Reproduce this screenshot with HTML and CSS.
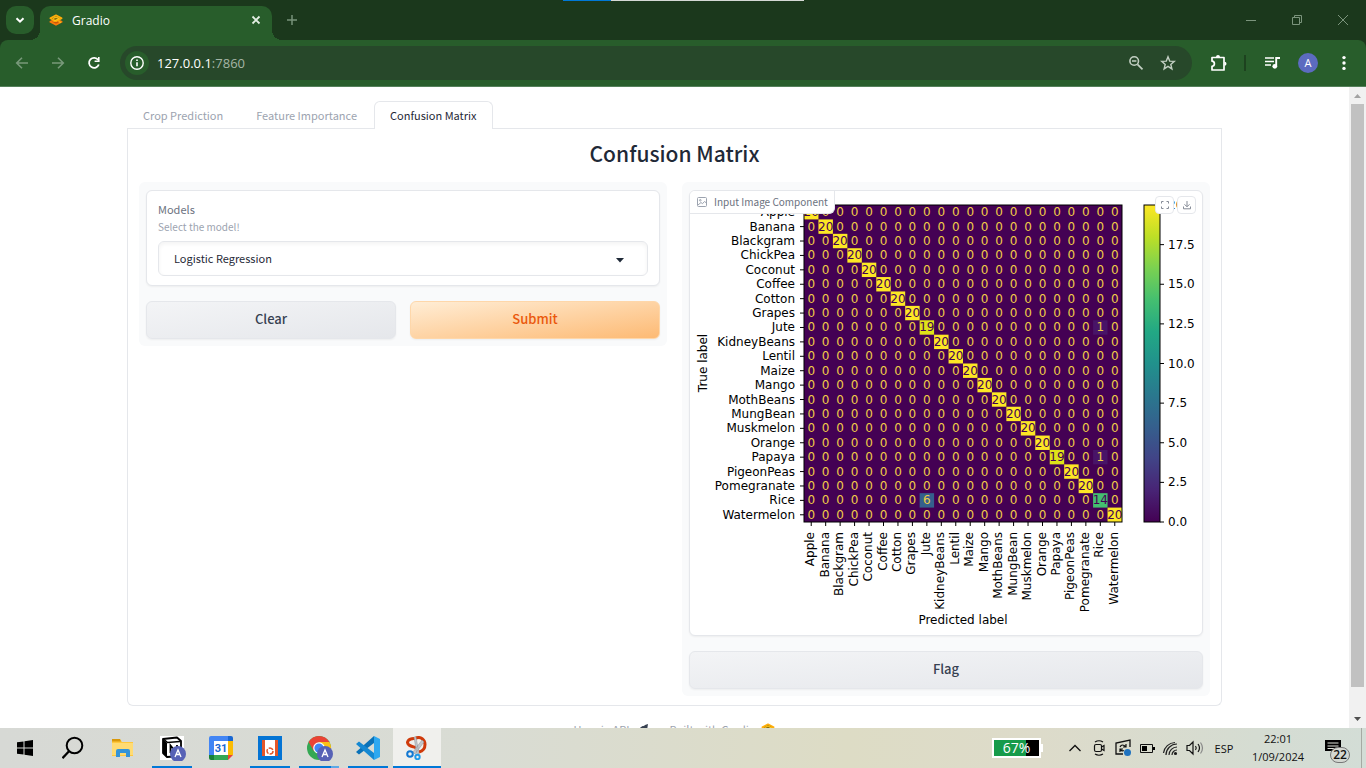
FILE: index.html
```html
<!DOCTYPE html>
<html lang="en">
<head>
<meta charset="utf-8">
<title>Gradio</title>
<link rel="stylesheet" href="styles.css">
</head>
<body>
<svg class="defs" aria-hidden="true">
  <symbol id="gradio-logo" viewBox="0 0 14 12">
    <path d="M7 5 12.700 7.800 7 10.800 1.300 7.800z" fill="#c8560a" stroke="#f97b0c" stroke-width="1.700" stroke-linejoin="round"/>
    <path d="M7 1.200 12.700 4.200 7 7.200 1.300 4.200z" fill="#8a6a10" stroke="#ffad0a" stroke-width="1.600" stroke-linejoin="round"/>
    <path d="M4 4.500 7 3l3 1.500-5.500 3M9.500 7.500l2.500 1" fill="none" stroke="#ffc917" stroke-width="1.100"/>
  </symbol>
</svg>

<header class="browser">
  <div class="capture-strip"></div>
  <div class="tabstrip">
    <button class="tab-search" aria-label="Search tabs"><svg width="12" height="12" viewBox="0 0 12 12"><path d="M2.500 4.200 6 7.700l3.500-3.500" fill="none" stroke="#fff" stroke-width="2"/></svg></button>
    <div class="browser-tab">
      <svg class="favicon" width="14" height="12"><use href="#gradio-logo"/></svg>
      <span class="browser-tab-title">Gradio</span>
      <button class="plain" aria-label="Close tab"><svg width="16" height="16" viewBox="0 0 16 16"><path d="m4.500 4.500 7 7m0-7-7 7" stroke="#e4efe4" stroke-width="1.800"/></svg></button>
    </div>
    <button class="plain new-tab" aria-label="New tab"><svg width="16" height="16" viewBox="0 0 16 16"><path d="M8 3v10M3 8h10" stroke="#78927a" stroke-width="1.500"/></svg></button>
    <div class="window-buttons">
      <button class="plain" aria-label="Minimize"><svg width="12" height="12"><path d="M1 6.500h10" stroke="#7b947c"/></svg></button>
      <button class="plain" aria-label="Restore"><svg width="12" height="12"><path d="M1.500 3.500h7v7h-7zM3.500 3.500v-2h7v7h-2" fill="none" stroke="#7b947c"/></svg></button>
      <button class="plain" aria-label="Close"><svg width="12" height="12"><path d="m1 1 10 10m0-10L1 11" stroke="#7b947c"/></svg></button>
    </div>
  </div>
  <div class="toolbar">
    <button class="plain tool" aria-label="Back"><svg width="16" height="16" viewBox="0 0 16 16"><path d="M14 8H3M8 2.700 2.700 8 8 13.300" fill="none" stroke="#78997a" stroke-width="1.600"/></svg></button>
    <button class="plain tool" aria-label="Forward"><svg width="16" height="16" viewBox="0 0 16 16"><path d="M2 8h11M8 2.700 13.300 8 8 13.300" fill="none" stroke="#78997a" stroke-width="1.600"/></svg></button>
    <button class="plain tool" aria-label="Reload"><svg width="16" height="16" viewBox="0 0 16 16"><path d="M12.800 9.500A5 5 0 1 1 12.200 5" fill="none" stroke="#fff" stroke-width="1.800"/><path d="M13.600 2v5H8.600V5.400H12V2z" fill="#fff"/></svg></button>
    <div class="omnibox">
      <button class="plain site-info" aria-label="Site information"><svg width="16" height="16" viewBox="0 0 16 16"><circle cx="8" cy="8" r="6.200" fill="none" stroke="#fff" stroke-width="1.400"/><path d="M8 7.300v4M8 4.400v1.600" stroke="#fff" stroke-width="1.600"/></svg></button>
      <span class="url">127.0.0.1<span class="port">:7860</span></span>
      <button class="plain omni-icon" aria-label="Zoom"><svg width="16" height="16" viewBox="0 0 16 16"><circle cx="6.200" cy="6" r="4.300" fill="none" stroke="#c2cfc2" stroke-width="1.600"/><path d="M4 6h4.400M9.500 9.300l5 5" stroke="#c2cfc2" stroke-width="1.700"/></svg></button>
      <button class="plain omni-icon" aria-label="Bookmark this tab"><svg width="16" height="16" viewBox="0 0 16 16"><path d="m8 1.800 1.700 4.300 4.600.3-3.500 3 1.100 4.500L8 11.400l-3.900 2.500 1.100-4.500-3.500-3 4.600-.3z" fill="none" stroke="#c2cfc2" stroke-width="1.400"/></svg></button>
    </div>
    <button class="plain tool extensions" aria-label="Extensions"><svg width="18" height="18" viewBox="0 0 18 18"><path d="M3 3.500h12v12.500H3v-3.700q2.400-.3 2.400-2.600T3 7.200z" fill="none" stroke="#fff" stroke-width="1.700" stroke-linejoin="round"/><path d="M7 3a2 2 0 0 1 4 0zM15.500 7.700a2 2 0 0 1 0 4z" fill="#fff"/></svg></button>
    <span class="tool-separator"></span>
    <button class="plain tool" aria-label="Media controls"><svg width="18" height="18" viewBox="0 0 18 18"><path d="M2 4h9M2 7.500h9M2 11h6" stroke="#fff" stroke-width="1.700"/><path d="M13.200 12V4h3.800" fill="none" stroke="#fff" stroke-width="1.900"/><circle cx="11.800" cy="12.300" r="2.400" fill="#fff"/></svg></button>
    <button class="plain tool" aria-label="Profile"><span class="avatar">A</span></button>
    <button class="plain tool" aria-label="Menu"><svg width="16" height="16"><g fill="#fff"><circle cx="8" cy="2.600" r="1.700"/><circle cx="8" cy="8" r="1.700"/><circle cx="8" cy="13.400" r="1.700"/></g></svg></button>
  </div>
</header>

<div class="viewport">
  <div class="page">
    <main class="container">
      <div class="tabs" role="tablist">
        <button class="tab" role="tab">Crop Prediction</button>
        <button class="tab" role="tab">Feature Importance</button>
        <button class="tab tab-selected" role="tab" aria-selected="true">Confusion Matrix</button>
      </div>
      <section class="panel">
        <h1>Confusion Matrix</h1>
        <div class="columns">
          <div class="column">
            <div class="block field">
              <label for="models">Models</label>
              <p class="hint">Select the model!</p>
              <div class="select-wrap">
                <select id="models"><option>Logistic Regression</option></select>
                <svg class="caret" width="8" height="5" viewBox="0 0 8 5"><path d="M0 0h8L4 4.500z" fill="#1f2937"/></svg>
              </div>
            </div>
            <div class="actions">
              <button class="btn">Clear</button>
              <button class="btn btn-primary">Submit</button>
            </div>
          </div>
          <div class="column">
            <div class="block image-block">
              <svg id="chart" class="chart" viewBox="0 0 512 444" role="img" aria-label="Confusion matrix"></svg>
              <div class="image-label">
                <svg width="10" height="10" viewBox="0 0 10 10" fill="none" stroke="#9ca3af"><rect x=".500" y=".500" width="9" height="9" rx="1"/><circle cx="3.300" cy="3.300" r=".800"/><path d="m1 8 3-2.500 1.500 1.200L7.500 4.500 9.500 6"/></svg>
                <span>Input Image Component</span>
              </div>
              <div class="image-tools">
                <button aria-label="Fullscreen"><svg width="10" height="10" viewBox="0 0 10 10"><path d="M1.500 3.500v-2h2M6.500 1.500h2v2M8.500 6.500v2h-2M3.500 8.500h-2v-2" fill="none" stroke="#858b96"/></svg></button>
                <button aria-label="Download"><svg width="10" height="10" viewBox="0 0 10 10"><path d="M5 1v5.500M2.500 4.300 5 6.800l2.500-2.500M1.500 6.500v2.300h7V6.500" fill="none" stroke="#858b96"/></svg></button>
              </div>
            </div>
            <button class="btn">Flag</button>
          </div>
        </div>
      </section>
    </main>
    <footer class="page-footer">
      <a href="#api">Use via API <svg width="12" height="12" viewBox="0 0 12 12"><path d="M2 5C4 2.500 6 3.500 7 2L10 1l-.500 3-.500 5L6 11 3 9z" fill="#374151"/></svg></a>
      <a href="#gradio">Built with Gradio <svg width="14" height="12"><use href="#gradio-logo"/></svg></a>
    </footer>
  </div>
  <div class="scrollbar">
    <svg width="17" height="17"><path d="M5 11h7L8.500 7z" fill="#a3a3a3"/></svg>
    <div class="scroll-thumb"></div>
    <svg width="17" height="17"><path d="M5 6h7l-3.500 4z" fill="#505050"/></svg>
  </div>
</div>

<footer class="taskbar">
  <div class="apps">
    <button class="app" aria-label="Start"><svg width="16" height="16"><path d="M0 2.300 6.500 1.400V7.500H0zM7.500 1.200 16 0v7.500H7.500zM0 8.500h6.500v6.100L0 13.700zM7.500 8.500H16V16l-8.500-1.200z"/></svg></button>
    <button class="app" aria-label="Search"><svg width="24" height="24"><circle cx="12.500" cy="9.500" r="7.800" fill="none" stroke="#000" stroke-width="2"/><path d="m7 15.200-6.500 7" stroke="#000" stroke-width="2.200"/></svg></button>
    <button class="app" aria-label="File Explorer"><svg width="24" height="24"><path d="M1 3h8l2 3h11v14H1z" fill="#ffc83d"/><path d="M1 3h8l1 2.500H1z" fill="#d9980a"/><path d="M1 7h21v12H1z" fill="#ffdb73"/><path d="M5 21v-6q0-2 2-2h10q2 0 2 2v6h-4v-4H9v4z" fill="#3594d8"/></svg></button>
    <button class="app running" aria-label="Notion"><svg width="28" height="26"><path fill="#fff" d="M2 1h24v24H2z"/><path d="m5 4 14-1.500 4 3.500v15l-14 1-4-4z" fill="#fff" stroke="#000" stroke-width="1.800" stroke-linejoin="round"/><path d="m5 4 4 4v14l-4-4z"/><path d="m6 4.500 3.500 3L22 6.500" fill="none" stroke="#000" stroke-width="1.600"/><path d="M12.500 18v-7.500l6.500 8V10" fill="none" stroke="#000" stroke-width="1.800"/><circle cx="20" cy="19" r="8" fill="#5762b6"/><path d="m17 22 3-7 3 7m-5-2.500h4" fill="none" stroke="#fff" stroke-width="1.300"/></svg></button>
    <button class="app" aria-label="Calendar"><svg width="24" height="24"><path d="M0 2q0-2 2-2h17v5H5v14H0z" fill="#4285f4"/><path d="M19 0h3q2 0 2 2v3h-5z" fill="#1967d2"/><path d="M19 5h5v14h-5z" fill="#fbbc04"/><path d="M5 19h14v5H5z" fill="#34a853"/><path d="M0 19h5v5H2q-2 0-2-2z" fill="#188038"/><path d="M19 19h5l-5 5z" fill="#ea4335"/><path d="M5 5h14v14H5z" fill="#fff"/><text x="12" y="16" class="calendar-day">31</text></svg></button>
    <button class="app running" aria-label="Recorder"><svg width="24" height="24"><path d="M0 0h24v24H0z" fill="#0474d4"/><path d="M4 4h16v16H4z" fill="#fff"/><path d="M4 4h3v16H4zM17 4h3v16h-3z" fill="#e4572a"/><circle cx="12" cy="15" r="3" fill="none" stroke="#e4572a" stroke-width="1.500" stroke-dasharray="5 1.200"/></svg></button>
    <button class="app running stacked" aria-label="Chrome"><svg width="28" height="26"><circle cx="14" cy="13" r="12" fill="#34a853"/><path d="M3.600 7A12 12 0 0 1 24.400 7H14L8.800 16z" fill="#ea4335"/><path d="M24.400 7A12 12 0 0 1 14 25l5.200-9L14 7z" fill="#fbc116"/><circle cx="14" cy="13" r="5.800" fill="#fff"/><circle cx="14" cy="13" r="4.600" fill="#4285f4"/><circle cx="20" cy="19" r="8" fill="#5762b6"/><path d="m17 22 3-7 3 7m-5-2.500h4" fill="none" stroke="#fff" stroke-width="1.300"/></svg></button>
    <button class="app running" aria-label="Visual Studio Code"><svg width="24" height="24"><path d="M18 0v7L3 18.500l-3-2.500z" fill="#0a72b8"/><path d="M18 24v-7L3 5.500 0 8z" fill="#1488d2"/><path d="M18 0 24 3v18l-6 3z" fill="#2ea8f0"/></svg></button>
    <button class="app running active" aria-label="Snipping Tool"><svg width="24" height="24"><path d="M10 2.500C16-.5 20 4 20 8.500S18 15 14 16" fill="none" stroke="#cf3a0b" stroke-width="3"/><path d="M10 2.500C3 2 1 6.500 4 9s5 1 7 3" fill="none" stroke="#cf3a0b" stroke-width="3"/><path d="M9 1h2l3 17-2 1zM17 4l2 2-9 12-2-2z" fill="#c2c6ca" stroke="#8b9197" stroke-width=".500"/><circle cx="5" cy="18" r="2.800" fill="none" stroke="#1377d1" stroke-width="2"/><circle cx="12.500" cy="21" r="2.200" fill="none" stroke="#229ae8" stroke-width="2"/></svg></button>
  </div>
  <div class="tray">
    <div class="battery-meter"><span>67%</span></div>
    <button class="tray-icon" aria-label="Show hidden icons"><svg width="18" height="18"><path d="m3.500 12 5.500-5.500L14.500 12" fill="none" stroke="#111" stroke-width="1.300"/></svg></button>
    <button class="tray-icon" aria-label="Meet now"><svg width="18" height="18" fill="none" stroke="#111" stroke-width="1.200"><rect x="4.500" y="5.500" width="7" height="7" rx="1.500"/><path d="m11.500 8 2.500-1.500v5L11.500 10M5 3q4-2.500 8 0M5 15q4 2.500 8 0"/></svg></button>
    <button class="tray-icon" aria-label="Sync"><svg width="18" height="18"><path d="M9 15H2V4l14-3v7" fill="none" stroke="#111" stroke-width="1.300"/><path d="M6 8q2-4 6 0M12 5v3H9M6 13v-3h3M6 10.500q2 2 4 1" fill="none" stroke="#111" stroke-width="1.200"/><circle cx="13.500" cy="13.500" r="3.500" fill="#1f72bf"/></svg></button>
    <button class="tray-icon" aria-label="Battery"><svg width="18" height="18"><path d="M2.500 5.500h12v8h-12z" fill="none" stroke="#111"/><path d="M4 7h5v5H4zM15 8h2v3h-2z"/></svg></button>
    <button class="tray-icon" aria-label="Network"><svg width="18" height="18" fill="none" stroke="#222" stroke-width="1.200"><path d="M4 16A11 11 0 0 1 15 5M7 16a8 8 0 0 1 8-8M10 16a5 5 0 0 1 5-5M1.500 14A12 12 0 0 1 13 3.500"/><circle cx="13.500" cy="14.500" r="1" fill="#111"/></svg></button>
    <button class="tray-icon" aria-label="Volume"><svg width="18" height="18" fill="none" stroke="#111" stroke-width="1.200"><path d="M1 6.500h2.500L7 3v12l-3.500-3.500H1zM9.500 7q1.500 2 0 4M12 5q3 4 0 8"/><path d="M14.500 3.500q4 5.500 0 11" stroke="#888"/></svg></button>
    <span class="language">ESP</span>
    <div class="clock"><span>22:01</span><span>1/09/2024</span></div>
    <button class="notifications" aria-label="Notifications"><svg width="30" height="30"><path d="M5 7h16v11h-4l-3 3v-3H5z"/><path d="M7.500 10h11M7.500 13h11M7.500 15.500h8" stroke="#dfe3da"/></svg><span class="count">22</span></button>
    <span class="show-desktop"></span>
  </div>
</footer>
<script src="chart.js"></script>
</body>
</html>
```
FILE: styles.css
```css
* { box-sizing: border-box; }

body {
  margin: 0;
  height: 100vh;
  display: flex;
  flex-direction: column;
  overflow: hidden;
  background: #fff;
  font-family: "Open Sans", "Noto Sans", sans-serif;
}

button { font: inherit; color: inherit; cursor: pointer; }
svg { display: block; }
.defs { position: absolute; width: 0; height: 0; }

.plain {
  display: flex;
  align-items: center;
  justify-content: center;
  padding: 0;
  border: 0;
  background: none;
}

/* Browser frame */
.browser { flex: none; position: relative; background: #1b381c; }

.capture-strip {
  position: absolute;
  top: 0;
  left: 563px;
  width: 241px;
  height: 1px;
  background: linear-gradient(90deg, #0078d7 48px, #d5d9d5 48px);
}

.tabstrip { display: flex; align-items: center; height: 40px; padding-left: 6px; }

.tab-search {
  display: flex;
  align-items: center;
  justify-content: center;
  width: 28px;
  height: 28px;
  padding: 0;
  border: 0;
  border-radius: 10px;
  background: #285d2b;
}

.browser-tab {
  position: relative;
  display: flex;
  align-items: center;
  align-self: flex-end;
  width: 232px;
  height: 34px;
  margin-left: 6px;
  padding: 0 8px 6px 9px;
  border-radius: 10px 10px 0 0;
  background: #285d2b;
  color: #fff;
  font-size: 12px;
}

.browser-tab::before,
.browser-tab::after {
  content: "";
  position: absolute;
  bottom: 0;
  width: 10px;
  height: 10px;
}
.browser-tab::before { left: -10px; background: radial-gradient(circle at 0 0, transparent 10px, #285d2b 10px); }
.browser-tab::after { right: -10px; background: radial-gradient(circle at 100% 0, transparent 10px, #285d2b 10px); }
.browser-tab-title { flex: 1; margin-left: 9px; }
.new-tab { width: 28px; height: 28px; margin-left: 6px; }
.window-buttons { display: flex; margin-left: auto; }
.window-buttons .plain { width: 46px; height: 40px; }

.toolbar {
  display: flex;
  align-items: center;
  height: 47px;
  padding: 0 4px;
  border-bottom: 1px solid #54805a;
  border-radius: 8px 8px 0 0;
  background: #285d2b;
}
.tool { width: 36px; height: 34px; }

.omnibox {
  flex: 1;
  display: flex;
  align-items: center;
  height: 34px;
  margin: 0 8px;
  padding: 0 8px 0 5px;
  border-radius: 17px;
  background: #27482a;
}
.site-info { width: 24px; height: 24px; border-radius: 12px; background: #285d2b; }
.url { flex: 1; margin-left: 8px; color: #fff; font-size: 13px; }
.port { color: #a5b5a6; }
.omni-icon { width: 32px; height: 32px; }
.tool-separator { width: 2px; height: 16px; margin: 0 8px; background: #1d421f; }

.avatar {
  width: 20px;
  height: 20px;
  border-radius: 10px;
  background: #5c6bc0;
  color: #fff;
  font-size: 11px;
  line-height: 20px;
}

/* Gradio page */
.viewport {
  flex: 1;
  min-height: 0;
  display: flex;
  font-family: "Noto Sans CJK SC", "Open Sans", sans-serif;
}
.page { flex: 1; min-width: 0; overflow: hidden; }
.container { max-width: 1095px; margin: 0 auto; padding-top: 14px; }
.tabs { display: flex; gap: 1px; border-bottom: 1px solid #e5e7eb; }

.tab {
  height: 27px;
  margin-bottom: -1px;
  padding: 0 15px;
  border: 1px solid transparent;
  border-bottom: 0;
  background: none;
  color: #9ca3af;
  font-size: 11px;
  line-height: 24px;
}
.tab-selected {
  height: 28px;
  padding-bottom: 1px;
  border-color: #e5e7eb;
  border-radius: 6px 6px 0 0;
  background: #fff;
  color: #1f2937;
}

.panel {
  padding: 10px 11px 9px;
  border: 1px solid #e5e7eb;
  border-top: 0;
  border-radius: 0 0 6px 6px;
}
h1 {
  margin: 0 0 15px;
  color: #1f2937;
  font-size: 21px;
  font-weight: 500;
  line-height: 28px;
  text-align: center;
}

.columns { display: flex; align-items: flex-start; gap: 15px; }
.column {
  flex: 1;
  min-width: 0;
  display: flex;
  flex-direction: column;
  gap: 15px;
  padding: 8px 7px 7px;
  border-radius: 6px;
  background: #f9fafb;
}

.block {
  position: relative;
  overflow: hidden;
  border: 1px solid #e5e7eb;
  border-radius: 6px;
  background: #fff;
  box-shadow: 0 1px 2px rgba(0, 0, 0, 0.05);
}

.field { padding: 9px 11px; }
.field label { display: block; color: #6b7280; font-size: 11px; line-height: 18px; }
.hint { margin: 0 0 6px; color: #9ca3af; font-size: 10px; line-height: 17px; }
.select-wrap { position: relative; }
.select-wrap select {
  appearance: none;
  display: block;
  width: 100%;
  height: 35px;
  padding: 0 15px 2px;
  border: 1px solid #e5e7eb;
  border-radius: 6px;
  background: #fff;
  box-shadow: inset 0 2px 4px rgba(0, 0, 0, 0.05);
  color: #1f2937;
  font-family: inherit;
  font-size: 11px;
}
.caret { position: absolute; right: 24px; top: 17px; pointer-events: none; }

.actions { display: flex; gap: 14px; }
.actions .btn { flex: 1; }
.btn {
  height: 38px;
  padding: 0 0 2px;
  border: 1px solid #e5e7eb;
  border-radius: 6px;
  background: linear-gradient(to bottom right, #f3f4f6, #e5e7eb);
  box-shadow: 0 1px 2px rgba(0, 0, 0, 0.05);
  color: #374151;
  font-size: 13px;
  font-weight: 500;
  line-height: 34px;
}
.btn-primary {
  border-color: #fed7aa;
  background: linear-gradient(to bottom right, #ffedd5, #fdba74);
  color: #ea580c;
}

.chart { width: 100%; height: auto; font-family: "DejaVu Sans", sans-serif; font-size: 12px; }
.chart-middle { text-anchor: middle; }
.chart-end { text-anchor: end; }

.image-label {
  position: absolute;
  top: 0;
  left: 0;
  display: flex;
  align-items: center;
  gap: 7px;
  height: 23px;
  padding: 0 6px 0 7px;
  border: solid #e5e7eb;
  border-width: 0 1px 1px 0;
  border-radius: 0 0 6px;
  background: #fff;
  color: #6b7280;
  font-size: 10px;
  line-height: 22px;
}
.image-tools { position: absolute; top: 5px; right: 6px; display: flex; gap: 3px; }
.image-tools button {
  display: flex;
  align-items: center;
  justify-content: center;
  width: 19px;
  height: 18px;
  padding: 0;
  border: 1px solid #e5e7eb;
  border-radius: 4px;
  background: #fff;
}

.page-footer {
  display: flex;
  justify-content: center;
  gap: 19px;
  margin-top: 14px;
  font-size: 11px;
  line-height: 18px;
}
.page-footer a { display: flex; align-items: center; gap: 6px; color: #9ca3af; text-decoration: none; }
.page-footer a:first-child { gap: 9px; }

.scrollbar { flex: none; display: flex; flex-direction: column; width: 17px; background: #f1f1f1; }
.scroll-thumb { flex: 1; margin: 0 2px 24px; background: #c1c1c1; }

/* Taskbar */
.taskbar {
  flex: none;
  display: flex;
  justify-content: space-between;
  height: 40px;
  background: linear-gradient(90deg, #d7d9d5, #d9dcd4 35%, #dddcc5 62%, #dddbca 76%, #d5dcd2 92%, #d3ddd6);
  color: #111;
}
.apps { display: flex; gap: 1px; padding-left: 1px; }
.app {
  position: relative;
  display: flex;
  align-items: center;
  justify-content: center;
  width: 48px;
  padding: 0;
  border: 0;
  background: none;
}
.running::after {
  content: "";
  position: absolute;
  bottom: 0;
  left: 4px;
  right: 4px;
  height: 2px;
  background: #0078d7;
}
.stacked::after { background: linear-gradient(90deg, #0078d7 32px, #5da9e6 32px); }
.active { background: #f0f0ed; }
.active::after { left: 0; right: 0; }
.calendar-day { fill: #1967d2; font-family: Roboto, sans-serif; font-size: 11px; font-weight: 700; text-anchor: middle; }

.tray { display: flex; align-items: center; }
.battery-meter {
  position: relative;
  width: 49px;
  height: 20px;
  margin-right: 22px;
  border: 2px solid #fff;
  background: linear-gradient(90deg, #169b4a 32px, #000 32px);
  color: #fff;
  font-size: 14px;
  line-height: 16px;
  text-align: center;
}
.battery-meter::after { content: ""; position: absolute; right: -4px; top: 4px; width: 2px; height: 8px; background: #fff; }
.tray-icon {
  display: flex;
  align-items: center;
  justify-content: center;
  width: 24px;
  height: 40px;
  padding: 0;
  border: 0;
  background: none;
}
.language { width: 34px; font-size: 11px; text-align: center; }
.clock { display: flex; flex-direction: column; width: 74px; font-size: 11px; line-height: 18px; text-align: center; }
.notifications { position: relative; width: 46px; height: 40px; padding: 5px; border: 0; background: none; }
.count {
  position: absolute;
  left: 15px;
  top: 19px;
  width: 20px;
  height: 16px;
  border: 1px solid #777;
  border-radius: 8px;
  background: #d3d7d1;
  font-size: 12px;
  font-weight: 600;
  line-height: 14px;
}
.show-desktop { align-self: stretch; width: 5px; border-left: 1px solid #a5aaa3; }
```
FILE: chart.js
```js
const crops = ["Apple", "Banana", "Blackgram", "ChickPea", "Coconut", "Coffee", "Cotton", "Grapes",
  "Jute", "KidneyBeans", "Lentil", "Maize", "Mango", "MothBeans", "MungBean", "Muskmelon",
  "Orange", "Papaya", "PigeonPeas", "Pomegranate", "Rice", "Watermelon"];
const matrix = crops.map((_, r) => crops.map((_, c) => (r === c ? 20 : 0)));
const at = name => crops.indexOf(name);
matrix[at("Jute")][at("Jute")] = 19;
matrix[at("Jute")][at("Rice")] = 1;
matrix[at("Papaya")][at("Papaya")] = 19;
matrix[at("Papaya")][at("Rice")] = 1;
matrix[at("Rice")][at("Jute")] = 6;
matrix[at("Rice")][at("Rice")] = 14;

const viridis = { 0: "#440154", 1: "#481467", 6: "#35608d", 14: "#44bf70", 19: "#dfe318", 20: "#fde725" };
const scale = ["#440154", "#482475", "#414487", "#355f8d", "#2a788e", "#21918c", "#22a884", "#44bf70", "#7ad151", "#bddf26", "#fde725"];
const left = 114, top0 = 14, width = 318, height = 317;
const cw = width / crops.length, ch = height / crops.length;
const bottom = top0 + height;

let out = `<defs><linearGradient id="bar" x1="0" y1="1" x2="0" y2="0">` +
  scale.map((c, i) => `<stop offset="${i * 10}%" stop-color="${c}"/>`).join("") +
  `</linearGradient></defs><rect x="${left}" y="${top0}" width="${width}" height="${height}" fill="#440154"/>`;

matrix.forEach((row, r) => row.forEach((v, c) => {
  const x = left + c * cw, y = top0 + r * ch;
  if (v) out += `<rect x="${x}" y="${y}" width="${cw}" height="${ch}" fill="${viridis[v]}"/>`;
  out += `<text class="chart-middle" x="${x + cw / 2}" y="${y + ch / 2 + 4}" fill="${v > 10 ? "#440154" : "#f0cc48"}">${v}</text>`;
}));
out += `<rect x="${left}" y="${top0}" width="${width}" height="${height}" fill="none" stroke="#000"/>`;

crops.forEach((name, i) => {
  const x = left + (i + 0.5) * cw, y = top0 + (i + 0.5) * ch;
  out += `<path d="M${left - 4} ${y}h4M${x} ${bottom}v4" stroke="#000"/>` +
    `<text class="chart-end" x="${left - 9}" y="${y + 4}">${name}</text>` +
    `<text class="chart-end" transform="translate(${x + 3} ${bottom + 10}) rotate(-90)">${name}</text>`;
});
out += `<text class="chart-middle" transform="translate(17 172) rotate(-90)">True label</text>` +
  `<text class="chart-middle" x="273" y="433">Predicted label</text>` +
  `<rect x="454" y="${top0}" width="16" height="${height}" fill="url(#bar)" stroke="#000"/>`;
for (let v = 0; v <= 20; v += 2.5) {
  const y = bottom - v / 20 * height;
  out += `<path d="M470 ${y}h4" stroke="#000"/><text x="478" y="${y + 4}">${v.toFixed(1)}</text>`;
}
document.getElementById("chart").innerHTML = out;
```
